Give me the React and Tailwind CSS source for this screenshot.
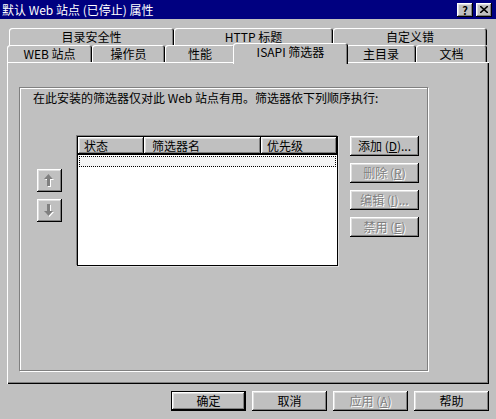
import React from "react";

const raised =
  "bg-[#c0c0c0] shadow-[inset_-1px_-1px_0_#000,inset_1px_1px_0_#fff,inset_-2px_-2px_0_#808080,inset_2px_2px_0_#dfdfdf]";
const tabEdge =
  "bg-[#c0c0c0] rounded-t-[3px] shadow-[inset_1px_1px_0_#fff,inset_-1px_0_0_#000,inset_-2px_0_0_#808080]";
const disabled = "text-[#808080] [text-shadow:1px_1px_0_#fff]";

function Tab({ w, children }) {
  return (
    <div className={`${tabEdge} ${w} h-[17px] flex items-center justify-center`}>
      {children}
    </div>
  );
}

function Btn({ className = "", off = false, children }) {
  return (
    <div className={`${raised} w-[69px] h-[20px] flex items-center justify-center ${off ? disabled : ""} ${className}`}>
      {children}
    </div>
  );
}

function Arrow({ down = false }) {
  const d = down
    ? "M3 0h3v7h3l-4.5 5L0 7h3z"
    : "M4.5 0L9 5H6v7H3V5H0z";
  return (
    <svg width="11" height="14" viewBox="0 0 11 14">
      <path d={d} fill="#fff" transform="translate(1 1)" />
      <path d={d} fill="#808080" />
    </svg>
  );
}

export default function App() {
  return (
    <div className="w-[496px] h-[419px] bg-[#c0c0c0] text-black text-[12px] leading-[14px] [font-family:'Noto_Sans_CJK_SC',sans-serif] overflow-hidden">
      {/* title bar */}
      <div className="h-[19px] bg-[#000080] flex items-center justify-between pl-[2px] pr-[4px]">
        <span className="text-white text-[12px]">默认 Web 站点 (已停止) 属性</span>
        <div className="flex gap-[3px]">
          <div className={`${raised} w-[16px] h-[14px] flex items-center justify-center font-bold text-[11px]`}>?</div>
          <div className={`${raised} w-[16px] h-[14px] flex items-center justify-center`}>
            <svg width="8" height="7" viewBox="0 0 8 7">
              <path d="M0 0L8 7M8 0L0 7" stroke="#000" strokeWidth="1.6" />
            </svg>
          </div>
        </div>
      </div>

      {/* tabs */}
      <div className="pl-[7px] pt-[9px]">
        <div className="flex ml-[2px]">
          <Tab w="w-[165px]">目录安全性</Tab>
          <Tab w="w-[159px]">HTTP 标题</Tab>
          <Tab w="w-[154px]">自定义错</Tab>
        </div>
        <div className="flex">
          <Tab w="w-[85px]">WEB 站点</Tab>
          <Tab w="w-[73px]">操作员</Tab>
          <Tab w="w-[70px]">性能</Tab>
          <div className={`${tabEdge} relative z-10 w-[115px] -mx-[2px] -mt-[2px] -mb-[2px] h-[21px] flex items-start pt-[2px] justify-center`}>
            ISAPI 筛选器
          </div>
          <Tab w="w-[70px]">主目录</Tab>
          <Tab w="w-[71px]">文档</Tab>
        </div>

        {/* panel */}
        <div className="w-[482px] h-[322px] bg-[#c0c0c0] shadow-[inset_1px_1px_0_#fff,inset_-1px_-1px_0_#000,inset_-2px_-2px_0_#808080] pl-[12px] pt-[25px]">
          <div className="w-[409px] h-[284px] border border-[#808080] shadow-[1px_1px_0_#fff,inset_1px_1px_0_#fff]">
            <div className="pl-[13px] pt-[3px]">在此安装的筛选器仅对此 Web 站点有用。筛选器依下列顺序执行:</div>

            <div className="flex items-start mt-[31px]">
              <div className="flex flex-col gap-[7px] pl-[17px] mt-[33px]">
                <div className={`${raised} w-[25px] h-[23px] flex items-center justify-center`}>
                  <Arrow />
                </div>
                <div className={`${raised} w-[25px] h-[23px] flex items-center justify-center`}>
                  <Arrow down />
                </div>
              </div>

              <div className="ml-[15px] w-[261px] h-[130px] bg-white border border-black shadow-[-1px_-1px_0_#808080,1px_1px_0_#dfdfdf] flex flex-col">
                <div className="flex h-[18px] border-b border-black">
                  <div className={`${raised} w-[66px] pl-[6px] flex items-center`}>状态</div>
                  <div className={`${raised} w-[117px] pl-[8px] flex items-center`}>筛选器名</div>
                  <div className={`${raised} flex-1 pl-[6px] flex items-center`}>优先级</div>
                </div>
                <div className="mx-[1px] mt-[1px] h-[11px] border border-dotted border-black bg-[#f4f4f4]" />
              </div>

              <div className="ml-[12px] flex flex-col gap-[7px]">
                <Btn>
                  添加 (<u>D</u>)...
                </Btn>
                <Btn off>
                  删除 (<u>R</u>)
                </Btn>
                <Btn off>
                  编辑 (<u>I</u>)...
                </Btn>
                <Btn off>
                  禁用 (<u>E</u>)
                </Btn>
              </div>
            </div>
          </div>
        </div>
      </div>

      {/* bottom buttons */}
      <div className="flex gap-[6px] pl-[171px] mt-[7px]">
        <div className="w-[75px] h-[20px] border border-black">
          <div className={`${raised} w-full h-full flex items-center justify-center`}>确定</div>
        </div>
        <div className={`${raised} w-[75px] h-[20px] flex items-center justify-center`}>取消</div>
        <div className={`${raised} w-[75px] h-[20px] flex items-center justify-center ${disabled}`}>
          应用 (<u>A</u>)
        </div>
        <div className={`${raised} w-[75px] h-[20px] flex items-center justify-center`}>帮助</div>
      </div>
    </div>
  );
}
